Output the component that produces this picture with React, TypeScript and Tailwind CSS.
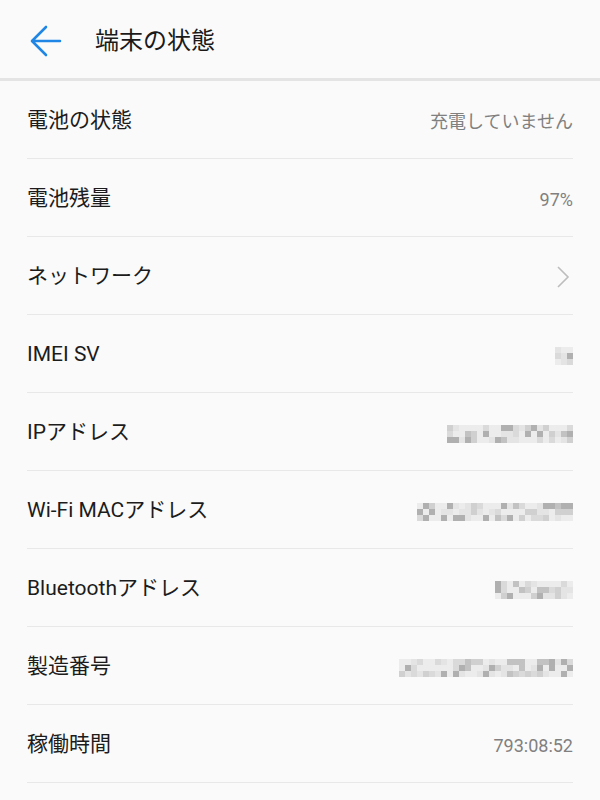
import React from 'react';

const shades = [
  'bg-[#f4f4f4]',
  'bg-[#ececec]',
  'bg-[#e4e4e4]',
  'bg-[#dadada]',
  'bg-[#d0d0d0]',
  'bg-[#c2c2c2]',
  'bg-[#b0b0b0]',
];

// pixelated placeholder for hidden values
function Blur({ cols, seed }: { cols: number; seed: number }) {
  const cells: string[] = [];
  let s = seed;
  for (let i = 0; i < cols * 3; i++) {
    s = (s * 9301 + 49297) % 233280;
    const r = s / 233280;
    cells.push(shades[Math.min(shades.length - 1, Math.floor(r * r * shades.length + 1))]);
  }
  return (
    <div className="grid grid-rows-3 grid-flow-col auto-cols-[6px] mt-[2px]">
      {cells.map((c, i) => (
        <div key={i} className={`h-[6px] ${c}`} />
      ))}
    </div>
  );
}

const rows: { label: string; value?: string; blur?: [number, number]; chevron?: boolean }[] = [
  { label: '電池の状態', value: '充電していません' },
  { label: '電池残量', value: '97%' },
  { label: 'ネットワーク', chevron: true },
  { label: 'IMEI SV', blur: [3, 7] },
  { label: 'IPアドレス', blur: [21, 13] },
  { label: 'Wi-Fi MACアドレス', blur: [26, 29] },
  { label: 'Bluetoothアドレス', blur: [13, 41] },
  { label: '製造番号', blur: [29, 53] },
  { label: '稼働時間', value: '793:08:52' },
];

export default function App() {
  return (
    <div className="w-[600px] h-[800px] bg-[#fafafa] overflow-hidden font-['Roboto','Noto_Sans_CJK_JP',sans-serif]">
      <header className="h-[78px] flex items-center pt-[3px]">
        <div className="w-[95px] pl-[30px] flex items-center">
          <svg width="32" height="32" viewBox="0 0 32 32" fill="none" stroke="#1f86e6" strokeWidth="2.6" strokeLinecap="round" strokeLinejoin="round">
            <path d="M30 16H3M16 2L2 16l14 14" />
          </svg>
        </div>
        <h1 className="text-[24px] text-[#1a1a1a]">端末の状態</h1>
      </header>
      <div className="h-[3px] bg-[#e4e4e4]" />
      <div className="px-[27px]">
        {rows.map((r) => (
          <div key={r.label} className="h-[78px] pt-[3px] flex items-center justify-between border-b border-[#e8e8e8]">
            <span className="text-[21px] text-[#1c1c1c]">{r.label}</span>
            {r.value && <span className="text-[18px] text-[#808080]">{r.value}</span>}
            {r.chevron && (
              <svg width="14" height="22" viewBox="0 0 14 22" fill="none" stroke="#bdbdbd" strokeWidth="1.6" className="mr-[3px]">
                <path d="M2 1l10 10L2 21" />
              </svg>
            )}
            {r.blur && <Blur cols={r.blur[0]} seed={r.blur[1]} />}
          </div>
        ))}
      </div>
    </div>
  );
}
